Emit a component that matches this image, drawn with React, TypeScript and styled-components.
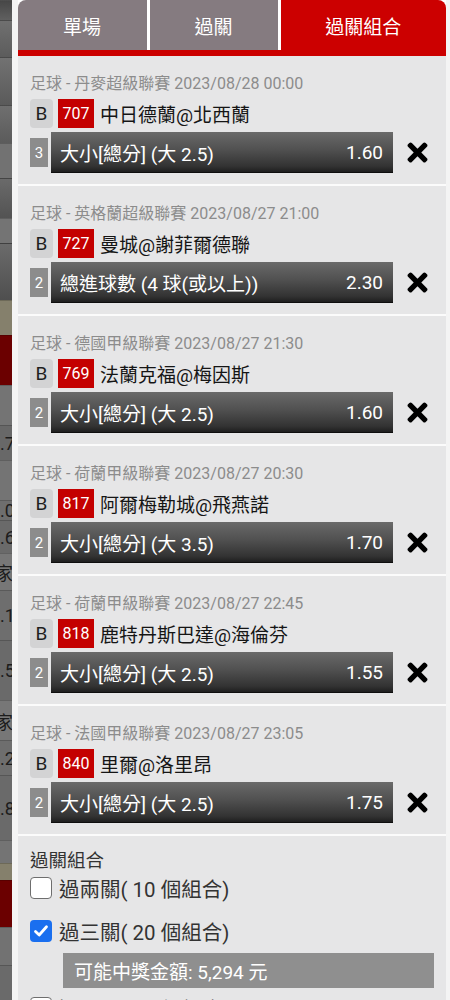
import * as React from 'react'
import styled, { createGlobalStyle } from 'styled-components'
import { FaTimes } from 'react-icons/fa'

const GlobalStyle = createGlobalStyle`
  html, body {
    margin: 0;
    padding: 0;
    height: 1000px;
    overflow: hidden;
    background: #ffffff;
  }
  body {
    font-family: Roboto, "Noto Sans CJK TC", sans-serif;
  }
`

const Page = styled.div`
  display: flex;
  height: 1000px;
  overflow: hidden;
`

// dimmed page behind the slip
const Backdrop = styled.div`
  width: 12px;
  flex: none;
  display: flex;
  flex-direction: column;
  overflow: hidden;
`

const Band = styled.div<{ $h: number; $bg: string }>`
  height: ${p => p.$h}px;
  flex: none;
  background: ${p => p.$bg};
  border-top: 1px solid rgba(0, 0, 0, 0.18);
  box-sizing: border-box;
  display: flex;
  align-items: center;
  overflow: hidden;
  white-space: nowrap;
  font-size: 18px;
  color: #1c1c1c;
`

const BandText = styled.span<{ $shift: number }>`
  margin-left: ${p => p.$shift}px;
`

const Panel = styled.div`
  flex: 1;
  background: #f4f4f4;
  padding: 0 4px 0 5.5px;
  display: flex;
  flex-direction: column;
  overflow: hidden;
`

const Tabs = styled.div`
  flex: none;
  display: grid;
  grid-template-columns: 129px 128px 1fr;
  gap: 3px;
  background: #ffffff;
  border-bottom: 6px solid #cc0000;
`

const Tab = styled.div<{ $active?: boolean }>`
  height: 50px;
  display: flex;
  align-items: center;
  justify-content: center;
  font-size: 19px;
  color: #ffffff;
  background: ${p => (p.$active ? '#cc0000' : '#857b80')};
  &:first-child { border-top-left-radius: 8px; }
  &:last-child { border-top-right-radius: 8px; }
`

const Card = styled.div`
  flex: none;
  background: #e6e6e7;
  height: 130px;
  box-sizing: border-box;
  padding: 18px 5px 0 12.5px;
  border-bottom: 2px solid #fbfbfb;
  display: flex;
  flex-direction: column;
`

const League = styled.div`
  font-size: 16px;
  line-height: 20px;
  color: #8c8c8c;
  white-space: nowrap;
`

const MatchRow = styled.div`
  display: flex;
  align-items: center;
  gap: 5px;
  margin-top: 5px;
  height: 29px;
`

const BBadge = styled.div`
  width: 23px;
  height: 29px;
  border-radius: 4px;
  background: #d3d3d4;
  display: flex;
  align-items: center;
  justify-content: center;
  font-size: 19px;
  color: #1e1e1e;
`

const NoBadge = styled.div`
  width: 36px;
  height: 29px;
  background: #c40000;
  display: flex;
  align-items: center;
  justify-content: center;
  font-size: 16px;
  color: #ffffff;
`

const Teams = styled.div`
  margin-left: 1px;
  font-size: 19px;
  color: #151515;
  white-space: nowrap;
`

const BetRow = styled.div`
  display: flex;
  align-items: center;
  margin-top: 4px;
`

const LegBadge = styled.div`
  width: 18px;
  height: 29px;
  flex: none;
  background: #8c8c8c;
  display: flex;
  align-items: center;
  justify-content: center;
  font-size: 15px;
  color: #ffffff;
`

const BetBar = styled.div`
  flex: 1;
  margin-left: 3px;
  height: 41px;
  box-sizing: border-box;
  padding: 0 10px 0 9px;
  display: flex;
  align-items: center;
  justify-content: space-between;
  background: linear-gradient(#6a6a6a 0%, #505050 45%, #333333 85%, #1e1e1e 100%);
  border-bottom: 1px solid #0e0e0e;
  color: #ffffff;
  font-size: 19px;
  white-space: nowrap;
`

const Remove = styled.div`
  width: 48px;
  flex: none;
  display: flex;
  align-items: center;
  justify-content: center;
  color: #000000;
`

const Combos = styled.div`
  background: #e6e6e7;
  flex: 1 0 auto;
  padding: 13px 12px 0 12.5px;
  display: flex;
  flex-direction: column;
`

const ComboTitle = styled.div`
  font-size: 18.5px;
  line-height: 24px;
  color: #333333;
`

const ComboRow = styled.div<{ $gap: number }>`
  display: flex;
  align-items: center;
  gap: 7px;
  height: 30px;
  flex: none;
  margin-top: ${p => p.$gap}px;
  font-size: 20.5px;
  color: #333333;
  white-space: nowrap;
`

const Box = styled.div<{ $on?: boolean }>`
  width: 22px;
  height: 22px;
  box-sizing: border-box;
  border-radius: 4px;
  background: ${p => (p.$on ? '#1a6fef' : '#ffffff')};
  border: ${p => (p.$on ? 'none' : '1.5px solid #6e6e6e')};
  display: flex;
  align-items: center;
  justify-content: center;
`

const Payout = styled.div`
  flex: none;
  margin: 7px 0 0 33px;
  height: 35px;
  background: #8f8f8f;
  color: #ffffff;
  font-size: 19px;
  display: flex;
  align-items: center;
  padding-left: 11px;
`

const bands = [
  { h: 20, bg: 'linear-gradient(#474747, #606060)' },
  { h: 37, bg: 'linear-gradient(#707070, #5c5c5c)' },
  { h: 48, bg: 'linear-gradient(#727272, #5a5a5a)' },
  { h: 38, bg: 'linear-gradient(#6f6f6f, #5b5b5b)' },
  { h: 35, bg: '#727272' },
  { h: 40, bg: 'linear-gradient(#6a6a6a, #535353)' },
  { h: 25, bg: '#747474' },
  { h: 57, bg: 'linear-gradient(#6b6b6b, #4f4f4f)' },
  { h: 35, bg: '#85806c' },
  { h: 50, bg: '#6b0000' },
  { h: 40, bg: '#747474' },
  { h: 35, bg: '#686868', text: '1.7', shift: -10 },
  { h: 40, bg: '#747474' },
  { h: 20, bg: '#6e6e6e', text: '1.0', shift: -10 },
  { h: 33, bg: '#6a6a6a', text: '1.6', shift: -10 },
  { h: 37, bg: '#777777', text: '家', shift: -5 },
  { h: 50, bg: '#6e6e6e', text: '1.1', shift: -10 },
  { h: 60, bg: '#6a6a6a', text: '1.5', shift: -10 },
  { h: 40, bg: '#777777', text: '家', shift: -5 },
  { h: 35, bg: '#6e6e6e', text: '1.2', shift: -10 },
  { h: 65, bg: '#6a6a6a', text: '1.8', shift: -10 },
  { h: 23, bg: '#747474' },
  { h: 17, bg: '#85806c' },
  { h: 47, bg: '#6b0000' },
  { h: 38, bg: '#727272' },
  { h: 35, bg: '#6a6a6a' },
]

const legs = [
  { league: '足球 - 丹麥超級聯賽 2023/08/28 00:00', no: '707', teams: '中日德蘭@北西蘭', n: '3', bet: '大小[總分] (大 2.5)', odds: '1.60' },
  { league: '足球 - 英格蘭超級聯賽 2023/08/27 21:00', no: '727', teams: '曼城@謝菲爾德聯', n: '2', bet: '總進球數 (4 球(或以上))', odds: '2.30' },
  { league: '足球 - 德國甲級聯賽 2023/08/27 21:30', no: '769', teams: '法蘭克福@梅因斯', n: '2', bet: '大小[總分] (大 2.5)', odds: '1.60' },
  { league: '足球 - 荷蘭甲級聯賽 2023/08/27 20:30', no: '817', teams: '阿爾梅勒城@飛燕諾', n: '2', bet: '大小[總分] (大 3.5)', odds: '1.70' },
  { league: '足球 - 荷蘭甲級聯賽 2023/08/27 22:45', no: '818', teams: '鹿特丹斯巴達@海倫芬', n: '2', bet: '大小[總分] (大 2.5)', odds: '1.55' },
  { league: '足球 - 法國甲級聯賽 2023/08/27 23:05', no: '840', teams: '里爾@洛里昂', n: '2', bet: '大小[總分] (大 2.5)', odds: '1.75' },
]

const Check = () => (
  <svg width="16" height="16" viewBox="0 0 16 16">
    <path d="M2.5 8.5 L6.2 12 L13.5 3.8" fill="none" stroke="#ffffff" strokeWidth="2.8" strokeLinecap="round" strokeLinejoin="round" />
  </svg>
)

export default function App() {
  return (
    <>
      <GlobalStyle />
      <Page>
        <Backdrop>
          {bands.map((b, i) => (
            <Band key={i} $h={b.h} $bg={b.bg}>
              {b.text && <BandText $shift={b.shift ?? 0}>{b.text}</BandText>}
            </Band>
          ))}
        </Backdrop>
        <Panel>
          <Tabs>
            <Tab>單場</Tab>
            <Tab>過關</Tab>
            <Tab $active>過關組合</Tab>
          </Tabs>
          {legs.map(l => (
            <Card key={l.no}>
              <League>{l.league}</League>
              <MatchRow>
                <BBadge>B</BBadge>
                <NoBadge>{l.no}</NoBadge>
                <Teams>{l.teams}</Teams>
              </MatchRow>
              <BetRow>
                <LegBadge>{l.n}</LegBadge>
                <BetBar>
                  <span>{l.bet}</span>
                  <span>{l.odds}</span>
                </BetBar>
                <Remove>
                  <FaTimes size={29} />
                </Remove>
              </BetRow>
            </Card>
          ))}
          <Combos>
            <ComboTitle>過關組合</ComboTitle>
            <ComboRow $gap={0}>
              <Box />
              <span>過兩關( 10 個組合)</span>
            </ComboRow>
            <ComboRow $gap={13}>
              <Box $on>
                <Check />
              </Box>
              <span>過三關( 20 個組合)</span>
            </ComboRow>
            <Payout>可能中獎金額: 5,294 元</Payout>
            <ComboRow $gap={5}>
              <Box />
              <span>過四關( 15 個組合)</span>
            </ComboRow>
          </Combos>
        </Panel>
      </Page>
    </>
  )
}
